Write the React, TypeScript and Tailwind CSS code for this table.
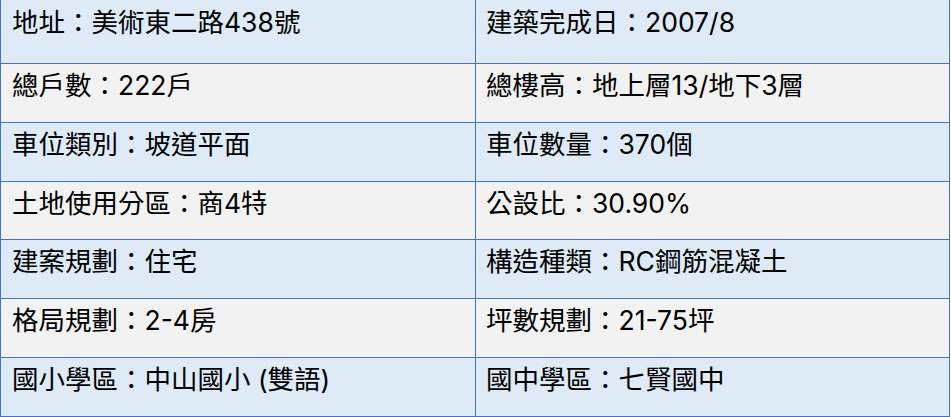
const rows: [string, string][] = [
  ['地址：美術東二路438號', '建築完成日：2007/8'],
  ['總戶數：222戶', '總樓高：地上層13/地下3層'],
  ['車位類別：坡道平面', '車位數量：370個'],
  ['土地使用分區：商4特', '公設比：30.90%'],
  ['建案規劃：住宅', '構造種類：RC鋼筋混凝土'],
  ['格局規劃：2-4房', '坪數規劃：21-75坪'],
  ['國小學區：中山國小 (雙語)', '國中學區：七賢國中'],
];

// row heights incl. bottom border, read off the screenshot
const heights = ['h-[64px]', 'h-[59px]', 'h-[59px]', 'h-[58px]', 'h-[59px]', 'h-[59px]', 'h-[59px]'];

export default function App() {
  return (
    <div className="w-[951px] h-[417px] bg-white overflow-hidden">
      <div
        className="w-[950px] border-x border-[#4472c4] text-black text-[26.5px] leading-[32px]"
        style={{ fontFamily: 'Inter, "Noto Sans CJK TC", sans-serif' }}
      >
        {rows.map(([left, right], i) => (
          <div
            key={left}
            className={`grid grid-cols-[475px_1fr] border-b border-[#4472c4] ${heights[i]} ${
              i % 2 === 0 ? 'bg-[#deeaf6]' : 'bg-[#f2f2f2]'
            }`}
          >
            <div className={`pl-[11px] border-r border-[#4472c4] ${i === 0 ? 'pt-[6px]' : 'pt-[5px]'}`}>
              {left}
            </div>
            <div className={`pl-[10px] ${i === 0 ? 'pt-[6px]' : 'pt-[5px]'}`}>{right}</div>
          </div>
        ))}
      </div>
    </div>
  );
}
